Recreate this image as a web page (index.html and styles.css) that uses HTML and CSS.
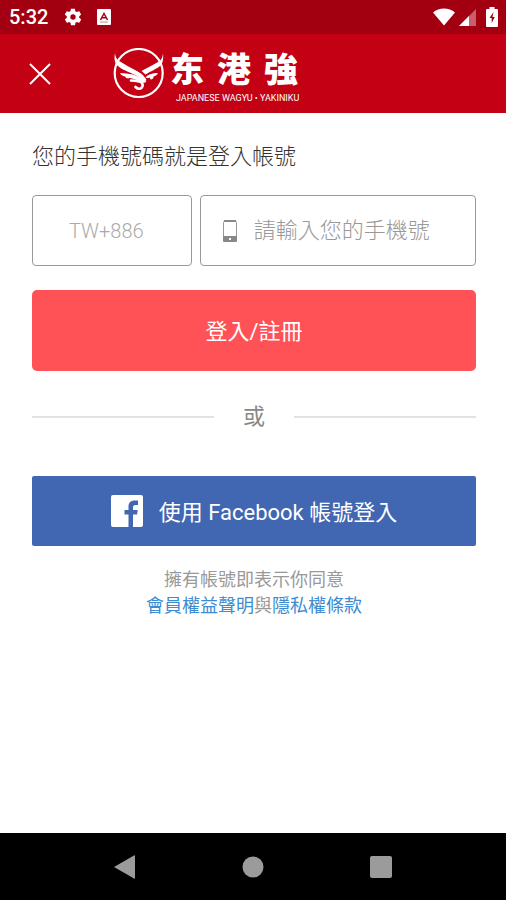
FILE: index.html
```html
<!DOCTYPE html>
<html lang="zh-Hant">
<head>
  <meta charset="UTF-8">
  <meta name="viewport" content="width=device-width, initial-scale=1.0">
  <title>登入</title>
  <link rel="stylesheet" href="styles.css">
</head>
<body>

  <div class="status-bar">
    <span class="time">5:32</span>
    <svg class="gear" width="20" height="20" viewBox="0 0 24 24" fill="#fff">
      <path d="M19.4 13c0-.3.1-.6.1-1s0-.7-.1-1l2.1-1.6c.2-.2.2-.4.1-.6l-2-3.5c-.1-.2-.4-.3-.6-.2l-2.5 1c-.5-.4-1.1-.7-1.7-1l-.4-2.6c0-.3-.2-.5-.5-.5h-4c-.2 0-.4.2-.5.4l-.4 2.7c-.6.2-1.1.6-1.7 1l-2.4-1c-.2-.1-.5 0-.6.2l-2 3.5c-.1.2-.1.5.1.6L4.6 11c0 .3-.1.7-.1 1s0 .7.1 1l-2.1 1.6c-.2.2-.2.4-.1.6l2 3.5c.1.2.4.3.6.2l2.4-1c.5.4 1.1.7 1.7 1l.4 2.6c0 .3.2.5.5.5h4c.2 0 .5-.2.5-.4l.4-2.7c.6-.2 1.2-.6 1.7-1l2.5 1c.2.1.5 0 .6-.2l2-3.5c.1-.2.1-.5-.1-.6L19.4 13zM12 15.2a3.2 3.2 0 1 1 0-6.4 3.2 3.2 0 0 1 0 6.4z"/>
    </svg>
    <svg width="14" height="16" viewBox="0 0 14 16">
      <rect width="14" height="16" rx="1" fill="#fff"/>
      <path d="M3.5 11L7 4.5l3.5 6.5M5 8.8h4" fill="none" stroke="#a20010" stroke-width="1.5"/>
      <path d="M3 13h8" stroke="#d78890"/>
    </svg>
    <div class="status-right">
      <svg width="22" height="18" viewBox="0 0 22 18" fill="#fff">
        <path d="M0 4.5C6-.8 16-.8 22 4.5L11 17.5z"/>
      </svg>
      <svg width="17" height="17" viewBox="0 0 17 17">
        <path d="M17 0v17H0z" fill="#c8606c"/>
        <path d="M10 7v10H0z" fill="#fff"/>
      </svg>
      <svg class="battery" width="12" height="20" viewBox="0 0 12 20">
        <path d="M3.5 0h5v2H11a1 1 0 0 1 1 1v16a1 1 0 0 1-1 1H1a1 1 0 0 1-1-1V3a1 1 0 0 1 1-1h2.5z" fill="#fff"/>
        <path d="M7.5 5L3.5 11h2.200v5L8.800 10H6.500z" fill="#a20010"/>
      </svg>
    </div>
  </div>

  <header class="header">
    <button type="button" class="close" aria-label="關閉">
      <svg width="22" height="22" viewBox="0 0 22 22" fill="none" stroke="#fff" stroke-width="2">
        <path d="M1 1l20 20M21 1L1 21"/>
      </svg>
    </button>
    <div class="brand">
      <svg width="52" height="52" viewBox="0 0 52 52" fill="#fff">
        <circle cx="25.7" cy="25" r="24" fill="none" stroke="#fff" stroke-width="2.2"/>
        <!-- horns -->
        <path d="M2 5c.5 4 1.500 6.500 5 8.500 5 3 10 6 15 8.500 5 2.500 9 5 11.500 10l-2.500 2c-3-4-6.500-6-11-8C13 23 6 20 3 16 1.300 13.500 1.200 9 2 5z"/>
        <path d="M50 5.500c-.5 4-1.500 6.500-5 8.500-6 3.500-11 6-16.500 9l4 3.500C38 23 45 20.500 48 17c2.300-3 2.500-7.500 2-11.500z"/>
        <!-- eyes and nose -->
        <path d="M7 25c4 .5 9 .5 13 1.500 5 1.500 9 4 13.500 7-1.500 1.500-3 1.500-4.500 1-4-2-8-4-12-4.500-2 1-4 .5-5-1.500C9.500 28 7.500 27 7 25z"/>
        <path d="M45 25c-3 0-7 .5-10.500 2.500l-2 2c2 .8 3 .8 4.500 0 0 1 0 1.800 1 2 2-.5 2.500-1.500 2.500-3 2-.5 4-1.500 4.500-3.500z"/>
        <path d="M18 32.500c4 .2 9 .5 11 2.500 1.500 2.500 0 5-1.500 5.500-1.500.6-3.500 0-5-1.500" fill="none" stroke="#fff" stroke-width="2.600" stroke-linecap="round"/>
      </svg>
      <div class="brand-text">
        <div class="brand-name"><span>东</span><span>港</span><span>強</span></div>
        <div class="brand-sub">JAPANESE WAGYU • YAKINIKU</div>
      </div>
    </div>
  </header>

  <main class="content">
    <form id="loginForm">
      <label class="title" for="phone">您的手機號碼就是登入帳號</label>
      <div class="fields">
        <select class="field country" id="country" name="country" aria-label="國碼">
          <option>TW+886</option>
        </select>
        <div class="field phone">
          <svg width="16" height="22" viewBox="0 0 16 22">
            <rect x="1.500" y="1" width="13" height="20" rx="1.500" fill="none" stroke="#999"/>
            <path d="M1 16h14v5a1 1 0 0 1-1 1H2a1 1 0 0 1-1-1z" fill="#888"/>
            <path d="M2 1h12" stroke="#888" stroke-width="2"/>
            <rect x="7" y="18" width="2" height="2" fill="#fff"/>
          </svg>
          <input type="tel" id="phone" name="phone" placeholder="請輸入您的手機號">
        </div>
      </div>
      <button type="submit" class="login">登入/註冊</button>
    </form>

    <div class="divider">或</div>

    <button type="button" class="facebook">
      <svg width="32" height="32" viewBox="0 0 32 32">
        <rect width="32" height="32" rx="2" fill="#fff"/>
        <path d="M17.500 32V19.500h-4V15h4v-3.500c0-4 2.500-6 6-6H27V10h-2.500c-2 0-2.500 1-2.500 2.300V15h4.700l-.600 4.500H22V32z" fill="#4267b2"/>
      </svg>
      <span>使用 Facebook 帳號登入</span>
    </button>

    <p class="terms">擁有帳號即表示你同意<br><a href="#">會員權益聲明</a>與<a href="#">隱私權條款</a></p>
  </main>

  <nav class="nav-bar">
    <button type="button" aria-label="返回">
      <svg width="22" height="24" viewBox="0 0 22 24" fill="#9b9b9b"><path d="M0 12L20 .5q1-.5 1 .5v22q0 1-1 .5z"/></svg>
    </button>
    <button type="button" aria-label="首頁">
      <svg width="22" height="22" viewBox="0 0 22 22" fill="#9b9b9b"><circle cx="11" cy="11" r="10.500"/></svg>
    </button>
    <button type="button" aria-label="最近">
      <svg width="22" height="22" viewBox="0 0 22 22" fill="#9b9b9b"><rect width="22" height="22" rx="2"/></svg>
    </button>
  </nav>

</body>
</html>
```
FILE: styles.css
```css
* {
  box-sizing: border-box;
}
body {
  display: flex;
  flex-direction: column;
  min-height: 100vh;
  margin: 0;
  background: #fff;
  font-family: Roboto, "Noto Sans CJK TC", sans-serif;
}
svg {
  display: block;
  flex: none;
}
button, input, select {
  font-family: inherit;
}
button {
  padding: 0;
  border: none;
  background: none;
  cursor: pointer;
}

/* status bar */
.status-bar {
  display: flex;
  align-items: center;
  height: 34px;
  padding: 0 8px 0 9px;
  background: #a20010;
  color: #fff;
}
.time {
  font-size: 20px;
  font-weight: 500;
}
.gear {
  margin: 0 14px 0 15px;
}
.status-right {
  display: flex;
  align-items: center;
  margin-left: auto;
}
.status-right svg {
  margin-left: 4px;
}
.status-right .battery {
  margin-left: 10px;
}

/* header */
.header {
  display: flex;
  align-items: center;
  height: 79px;
  padding-left: 29px;
  background: #c40014;
}
.brand {
  display: flex;
  align-items: center;
  margin-left: 62px;
  color: #fff;
}
.brand-text {
  margin-left: 5px;
}
.brand-name {
  display: flex;
  gap: 13px;
  font-family: "Noto Sans CJK SC", sans-serif;
  font-size: 34px;
  font-weight: 900;
  line-height: 48px;
}
.brand-sub {
  margin-top: 1px;
  padding-left: 6px;
  font-size: 9px;
  line-height: 11px;
  white-space: nowrap;
}

/* login form */
.content {
  flex: 1;
  padding: 28px 30px 28px 32px;
}
.title {
  display: block;
  color: #333;
  font-size: 22px;
  font-weight: 300;
  line-height: 32px;
}
.fields {
  display: flex;
  gap: 8px;
  margin: 22px 0 24px;
}
.field {
  height: 71px;
  border: 1px solid #999;
  border-radius: 4px;
  background: #fff;
}
.country {
  flex: 0 0 36%;
  padding: 0 36px;
  appearance: none;
  color: #aaa;
  font-size: 20px;
  font-weight: 300;
}
.phone {
  display: flex;
  flex: 1;
  align-items: center;
  min-width: 0;
  padding-left: 21px;
}
.phone input {
  flex: 1;
  min-width: 0;
  padding: 0 16px;
  border: none;
  outline: none;
  background: none;
  font-size: 22px;
  font-weight: 300;
}
.phone input::placeholder {
  color: #999;
}
.login,
.facebook {
  width: 100%;
  color: #fff;
  font-size: 22px;
}
.login {
  display: block;
  height: 81px;
  padding-bottom: 4px;
  border-radius: 5px;
  background: #ff5256;
}
.divider {
  display: flex;
  align-items: center;
  gap: 29px;
  margin: 29px 0 43px;
  color: #888;
  font-size: 22px;
  line-height: 33px;
}
.divider::before,
.divider::after {
  content: "";
  flex: 1;
  height: 2px;
  background: #e2e2e2;
}
.facebook {
  display: flex;
  align-items: center;
  justify-content: center;
  gap: 16px;
  height: 70px;
  border-radius: 2px;
  background: #4267b2;
}
.facebook span {
  padding-bottom: 3px;
}
.terms {
  margin: 21px 0 0;
  color: #999;
  font-size: 18px;
  line-height: 26px;
  text-align: center;
}
.terms a {
  color: #3d8bd0;
  text-decoration: none;
}

/* system navigation */
.nav-bar {
  display: grid;
  grid-template-columns: repeat(3, 1fr);
  height: 67px;
  padding: 0 12%;
  background: #000;
}
.nav-bar button {
  display: flex;
  align-items: center;
  justify-content: center;
}
```
